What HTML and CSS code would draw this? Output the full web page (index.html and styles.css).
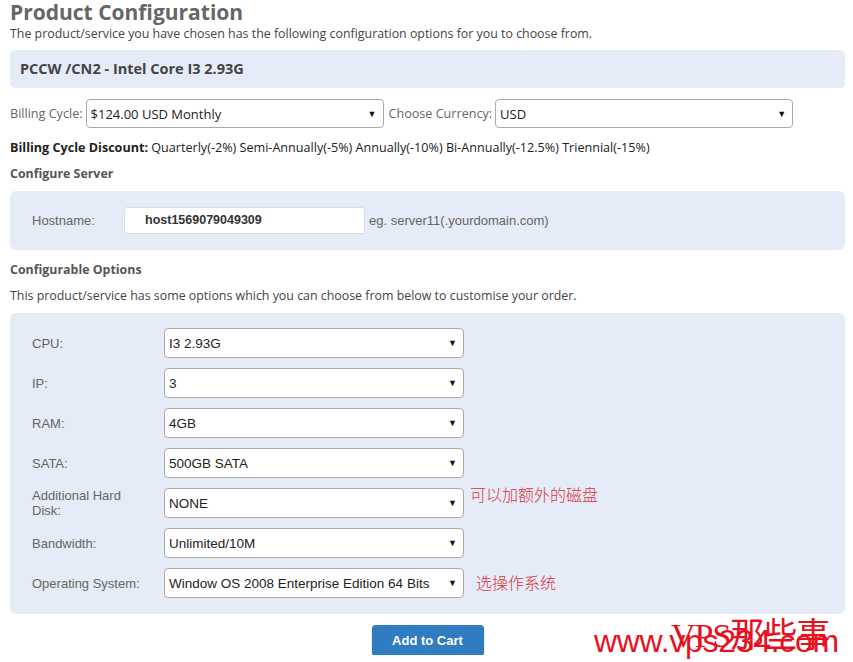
FILE: index.html
```html
<!DOCTYPE html>
<html lang="en">
<head>
<meta charset="UTF-8">
<title>Product Configuration</title>
<link rel="stylesheet" href="styles.css">
</head>
<body>
<div class="page">
<h1>Product Configuration</h1>
<p class="intro">The product/service you have chosen has the following configuration options for you to choose from.</p>

<div class="product-box">PCCW /CN2 - Intel Core I3 2.93G</div>

<div class="billing">
<span class="lbl">Billing Cycle:</span>
<div class="select wide"><span>$124.00 USD Monthly</span><i>&#9660;</i></div>
<span class="lbl">Choose Currency:</span>
<div class="select wide"><span>USD</span><i>&#9660;</i></div>
</div>

<p class="discount"><b>Billing Cycle Discount:</b> Quarterly(-2%) Semi-Annually(-5%) Annually(-10%) Bi-Annually(-12.5%) Triennial(-15%)</p>

<h3>Configure Server</h3>
<div class="panel server">
<span class="field-lbl">Hostname:</span>
<div class="input">host1569079049309</div>
<span class="hint">eg. server11(.yourdomain.com)</span>
</div>

<h3>Configurable Options</h3>
<p class="note">This product/service has some options which you can choose from below to customise your order.</p>

<div class="panel options">
<div class="row"><span class="field-lbl">CPU:</span><div class="select"><span>I3 2.93G</span><i>&#9660;</i></div></div>
<div class="row"><span class="field-lbl">IP:</span><div class="select"><span>3</span><i>&#9660;</i></div></div>
<div class="row"><span class="field-lbl">RAM:</span><div class="select"><span>4GB</span><i>&#9660;</i></div></div>
<div class="row"><span class="field-lbl">SATA:</span><div class="select"><span>500GB SATA</span><i>&#9660;</i></div></div>
<div class="row"><span class="field-lbl">Additional Hard Disk:</span><div class="select"><span>NONE</span><i>&#9660;</i></div><span class="mark up">可以加额外的磁盘</span></div>
<div class="row"><span class="field-lbl">Bandwidth:</span><div class="select"><span>Unlimited/10M</span><i>&#9660;</i></div></div>
<div class="row"><span class="field-lbl">Operating System:</span><div class="select"><span>Window OS 2008 Enterprise Edition 64 Bits</span><i>&#9660;</i></div><span class="mark os">选操作系统</span></div>
</div>

<div class="actions"><button class="cart">Add to Cart</button></div>
</div>

<div class="watermark">
<span class="wm-url">www.vps234.com</span>
<span class="wm-name">VPS那些事</span>
</div>
</body>
</html>
```
FILE: styles.css
```css
body {
margin: 0;
background: #fff;
font-family: "Open Sans", Arial, sans-serif;
color: #333;
}
.page {
padding: 0 8px 0 10px;
width: 835px;
}
h1 {
font-size: 21px;
color: #666;
margin: 0;
padding-top: 1px;
line-height: 23px;
font-weight: bold;
}
.intro {
font-size: 12.4px;
color: #444;
margin: 2px 0 0;
line-height: 16px;
}
.product-box {
margin-top: 8px;
background: #e5ebf7;
border-radius: 5px;
height: 38px;
line-height: 38px;
padding-left: 10px;
font-size: 14.5px;
font-weight: bold;
color: #444;
}
.billing {
display: flex;
align-items: center;
margin-top: 10px;
height: 31px;
}
.lbl {
font-size: 12.6px;
color: #666;
margin-right: 3px;
}
.select {
display: flex;
align-items: center;
justify-content: space-between;
width: 298px;
height: 29px;
box-sizing: border-box;
border: 1px solid #a9a9a9;
border-radius: 4px;
background: #fff;
padding: 0 6px 0 4px;
font-family: "Liberation Sans", Arial, sans-serif;
font-size: 13.5px;
color: #222;
}
.select.wide {
margin-right: 5px;
}
.select.wide span {
font-family: "Open Sans", Arial, sans-serif;
font-size: 13px;
}
.select i {
font-style: normal;
font-size: 9px;
color: #111;
}
.discount {
font-size: 12.6px;
color: #222;
margin: 11px 0 0;
line-height: 16px;
}
h3 {
font-size: 12.4px;
color: #555;
margin: 10px 0 0;
line-height: 16px;
}
.panel {
background: #e5ebf7;
border-radius: 6px;
margin-top: 9px;
font-family: "Liberation Sans", Arial, sans-serif;
}
.server {
display: flex;
align-items: center;
height: 59px;
padding-left: 22px;
}
.field-lbl {
font-size: 13px;
color: #666;
width: 92px;
}
.input {
width: 241px;
height: 27px;
box-sizing: border-box;
background: #fff;
border: 1px solid #d8dde6;
border-radius: 3px;
padding-left: 20px;
line-height: 25px;
font-size: 12.5px;
font-weight: bold;
color: #333;
}
.hint {
font-size: 13px;
color: #666;
margin-left: 4px;
}
.server + h3 {
margin-top: 12px;
}
.note {
font-size: 12.4px;
color: #444;
margin: 10px 0 0;
line-height: 16px;
}
.options {
margin-top: 9px;
padding: 15px 0 16px 22px;
display: flex;
flex-direction: column;
gap: 10px;
}
.row {
display: flex;
align-items: center;
height: 30px;
}
.row .field-lbl {
width: 108px;
padding-right: 24px;
line-height: 15px;
}
.row .select {
width: 300px;
height: 30px;
}
.mark {
color: #d9363e;
font-family: "Noto Sans CJK SC", sans-serif;
font-size: 16px;
font-weight: 300;
}
.mark.up {
align-self: flex-start;
margin-left: 6px;
margin-top: -6px;
}
.mark.os {
margin-left: 12px;
margin-top: -2px;
}
.actions {
display: flex;
justify-content: center;
margin-top: 11px;
}
.cart {
width: 112px;
height: 30px;
border: none;
border-radius: 4px;
background: #2f7dc0;
color: #fff;
font-family: "Liberation Sans", Arial, sans-serif;
font-weight: bold;
font-size: 13px;
box-shadow: 0 1px 1px #1d5a8f;
}
.watermark {
position: absolute;
left: 594px;
top: 610px;
width: 259px;
height: 52px;
color: #e8101e;
overflow: hidden;
}
.wm-url {
position: absolute;
left: 0;
top: 13px;
font-family: "Liberation Sans", Arial, sans-serif;
font-size: 32px;
letter-spacing: -0.3px;
}
.wm-name {
position: absolute;
left: 77px;
top: -2px;
font-family: "Liberation Serif", "Noto Sans CJK SC", serif;
font-size: 34px;
letter-spacing: -1px;
}
```
